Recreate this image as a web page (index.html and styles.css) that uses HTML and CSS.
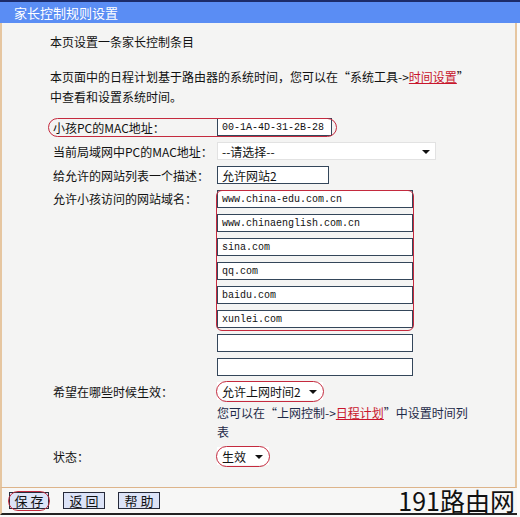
FILE: index.html
```html
<!DOCTYPE html>
<html lang="zh-CN">
<head>
  <meta charset="UTF-8" />
  <title>家长控制规则设置</title>
  <link rel="stylesheet" href="styles.css">
</head>
<body>

  <div class="page">
    <div class="title">家长控制规则设置</div>

    <div class="panel">
      <p class="lead">本页设置一条家长控制条目</p>
      <p class="note">本页面中的日程计划基于路由器的系统时间，您可以在“系统工具-&gt;<a href="#">时间设置</a>”<br>中查看和设置系统时间。</p>

      <div class="form">
        <!-- MAC address of the child's PC -->
        <div class="row ring-row">
          <span class="label">小孩PC的MAC地址：</span>
          <span class="field mono w-mac">00-1A-4D-31-2B-28</span>
        </div>

        <div class="row">
          <span class="label">当前局域网中PC的MAC地址：</span>
          <span class="select w-lan">--请选择--<i class="arrow"></i></span>
        </div>

        <div class="row">
          <span class="label">给允许的网站列表一个描述：</span>
          <span class="field w-desc">允许网站2</span>
        </div>

        <!-- allowed domain list, 8 slots -->
        <div class="row tall">
          <span class="label">允许小孩访问的网站域名：</span>
          <div class="domains">
            <div class="ring-group">
              <div class="slot"><span class="field mono w-dom">www.china-edu.com.cn</span></div>
              <div class="slot"><span class="field mono w-dom">www.chinaenglish.com.cn</span></div>
              <div class="slot"><span class="field mono w-dom">sina.com</span></div>
              <div class="slot"><span class="field mono w-dom">qq.com</span></div>
              <div class="slot"><span class="field mono w-dom">baidu.com</span></div>
              <div class="slot"><span class="field mono w-dom">xunlei.com</span></div>
            </div>
            <div class="slot"><span class="field mono w-dom"></span></div>
            <div class="slot"><span class="field mono w-dom"></span></div>
          </div>
        </div>

        <div class="row">
          <span class="label">希望在哪些时候生效：</span>
          <span class="select ringed w-time">允许上网时间2<i class="arrow"></i></span>
        </div>

        <p class="hint">您可以在“上网控制-&gt;<a href="#">日程计划</a>”中设置时间列<br>表</p>

        <div class="row state">
          <span class="label">状态：</span>
          <span class="select ringed w-state">生效<i class="arrow"></i></span>
        </div>
      </div>
    </div>

    <div class="actions">
      <button class="btn ringed w-save">保 存</button>
      <button class="btn">返 回</button>
      <button class="btn">帮 助</button>
    </div>

    <div class="stamp">191路由网</div>
  </div>

</body>
</html>
```

FILE: styles.css
```css
:root {
  --tan: #e6c6a0;
  --ring: #c42a3e;
  --edge: #34465a;
}

* {
  box-sizing: border-box;
}

body {
  margin: 0;
  background: #fafafa;
  font-family: "Noto Sans CJK SC", sans-serif;
  font-size: 12px;
  color: #111;
}

.page {
  width: 520px;
  height: 517px;
  position: relative;
}

.title {
  height: 23px;
  border-top: 2px solid #1c2c6a;
  background: #5a8df4;
  color: #fff;
  font-size: 13px;
  line-height: 21px;
  padding-left: 14px;
}

.panel {
  width: 517px;
  height: 465px;
  background: #f4f4f3;
  border-left: 2px solid var(--tan);
  border-right: 2px solid var(--tan);
  border-bottom: 1px solid #ddb48a;
  padding-top: 9px;
}

.panel p {
  margin: 0;
}

.lead {
  padding-left: 48px;
  line-height: 20px;
}

.note {
  margin-top: 15px !important;
  padding-left: 48px;
  line-height: 20px;
}

a {
  color: #c8162c;
  text-decoration: underline;
}

.form {
  margin-top: 8px;
}

.row {
  display: flex;
  align-items: center;
  height: 24px;
  position: relative;
}

.row.tall {
  align-items: flex-start;
  height: auto;
}

.row.tall .label {
  line-height: 24px;
}

.label {
  width: 215px;
  padding-left: 51px;
  flex: none;
}

.field {
  height: 18px;
  border: 1px solid var(--edge);
  background: #fff;
  display: flex;
  align-items: center;
  padding-left: 4px;
}

.mono {
  font-family: "Liberation Mono", monospace;
  font-size: 10px;
}

.w-mac { width: 115px; }
.w-desc { width: 112px; }
.w-dom { width: 196px; }

.domains {
  display: flex;
  flex-direction: column;
}

.slot {
  height: 24px;
  display: flex;
  align-items: center;
}

.select {
  height: 18px;
  background: #fff;
  border: 1px solid #e2e2e2;
  display: flex;
  align-items: center;
  padding-left: 4px;
  position: relative;
}

.w-lan { width: 219px; }
.w-time { width: 106px; border-color: #fff; }
.w-state { width: 52px; border-color: #fff; }

.arrow {
  position: absolute;
  right: 5px;
  top: 7px;
  border-left: 4px solid transparent;
  border-right: 4px solid transparent;
  border-top: 4px solid #111;
}

.hint {
  margin-left: 215px !important;
  line-height: 19px;
  color: #1e2a48;
}

.state {
  margin-top: 3px;
}

/* red hand-drawn style rings */
.ring-row::after,
.ring-group::after,
.ringed::after {
  content: "";
  position: absolute;
  border: 1.5px solid var(--ring);
  pointer-events: none;
}

.ring-row::after {
  left: 46px;
  right: 178px;
  top: 3px;
  bottom: 2px;
  border-radius: 10px;
}

.ring-group {
  position: relative;
}

.ring-group::after {
  left: -1px;
  right: -1px;
  top: 3px;
  bottom: 0;
  border-radius: 6px;
}

.ringed::after {
  left: -2px;
  right: -2px;
  top: -2px;
  bottom: -3px;
  border-radius: 11px;
}

.actions {
  width: 517px;
  height: 27px;
  border-left: 2px solid var(--tan);
  border-bottom: 2px solid #222;
  background: #f7f7f6;
  display: flex;
  align-items: flex-start;
  gap: 13px;
  padding: 4px 0 0 7px;
}

.btn {
  width: 42px;
  height: 17px;
  padding: 0;
  border: 1px solid #262a3a;
  background: #dce3f7;
  font-family: "Noto Sans CJK SC", sans-serif;
  font-size: 13px;
  line-height: 14px;
  color: #111;
  position: relative;
}

.w-save {
  width: 40px;
  margin-right: 1px;
}

.stamp {
  position: absolute;
  right: 5px;
  bottom: 3px;
  font-family: "Noto Sans CJK SC", sans-serif;
  font-size: 25px;
  line-height: 28px;
  color: #111;
}
```
